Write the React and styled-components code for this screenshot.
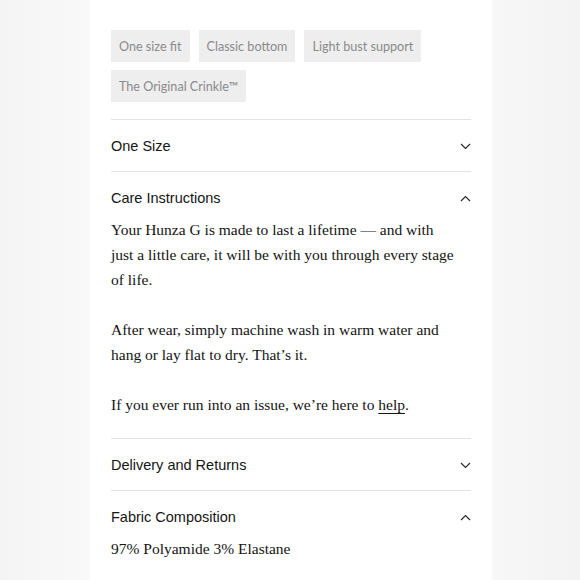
import { createGlobalStyle } from "styled-components";
import styled from "styled-components";

const GlobalStyle = createGlobalStyle`
  html, body {
    margin: 0;
    padding: 0;
    background: linear-gradient(90deg, #f4f4f4 0%, #f9f9f9 15%, #f7f7f7 85%, #f3f3f3 100%);
  }
`;

const Page = styled.div`
  display: flex;
  min-height: 580px;
  padding-left: 90px;
`;

const Panel = styled.main`
  width: 360px;
  background: #ffffff;
  padding: 30px 21px 0;
  box-sizing: content-box;
  min-height: 550px;
`;

const Tags = styled.div`
  display: flex;
  flex-wrap: wrap;
  gap: 8px 9px;
  margin-bottom: 17px;
`;

const Tag = styled.span`
  display: inline-flex;
  align-items: center;
  height: 32px;
  padding: 0 8px;
  background: #eeeeee;
  color: #8a8a8a;
  font-family: Lato, "Noto Sans", sans-serif;
  font-size: 12.6px;
`;

const Section = styled.section`
  border-top: 1px solid #e3e3e3;
`;

const Header = styled.div`
  display: flex;
  align-items: center;
  justify-content: space-between;
  padding: 18px 0 ${({ $open }) => ($open ? "10px" : "16px")};
  font-family: "Liberation Sans", Arial, sans-serif;
  font-size: 14.5px;
  line-height: 17px;
  color: #151515;
`;

const Body = styled.div`
  max-width: 344px;
  padding-bottom: ${({ $last }) => ($last ? "0" : "21px")};
  font-family: "Liberation Serif", "Times New Roman", serif;
  font-size: 15.5px;
  line-height: 25px;
  color: #141414;

  p {
    margin: 0 0 25px;
  }
  p:last-child {
    margin-bottom: 0;
  }
  a {
    color: inherit;
    text-decoration: underline;
    text-underline-offset: 3px;
    text-decoration-thickness: 1px;
  }
`;

function Chevron({ up }) {
  return (
    <svg width="11" height="7" viewBox="0 0 11 7">
      <polyline
        points={up ? "1,6 5.5,1.5 10,6" : "1,1 5.5,5.5 10,1"}
        fill="none"
        stroke="#2a2a2a"
        strokeWidth="1.2"
      />
    </svg>
  );
}

function Item({ title, open, last, children }) {
  return (
    <Section>
      <Header $open={open}>
        <span>{title}</span>
        <Chevron up={open} />
      </Header>
      {open && <Body $last={last}>{children}</Body>}
    </Section>
  );
}

export default function App() {
  return (
    <>
      <GlobalStyle />
      <Page>
        <Panel>
          <Tags>
            <Tag>One size fit</Tag>
            <Tag>Classic bottom</Tag>
            <Tag>Light bust support</Tag>
            <Tag>The Original Crinkle™</Tag>
          </Tags>
          <Item title="One Size" />
          <Item title="Care Instructions" open>
            <p>
              Your Hunza G is made to last a lifetime — and with just a little
              care, it will be with you through every stage of life.
            </p>
            <p>
              After wear, simply machine wash in warm water and hang or lay flat
              to dry. That’s it.
            </p>
            <p>
              If you ever run into an issue, we’re here to <a href="#">help</a>.
            </p>
          </Item>
          <Item title="Delivery and Returns" />
          <Item title="Fabric Composition" open last>
            <p>97% Polyamide 3% Elastane</p>
          </Item>
        </Panel>
      </Page>
    </>
  );
}
